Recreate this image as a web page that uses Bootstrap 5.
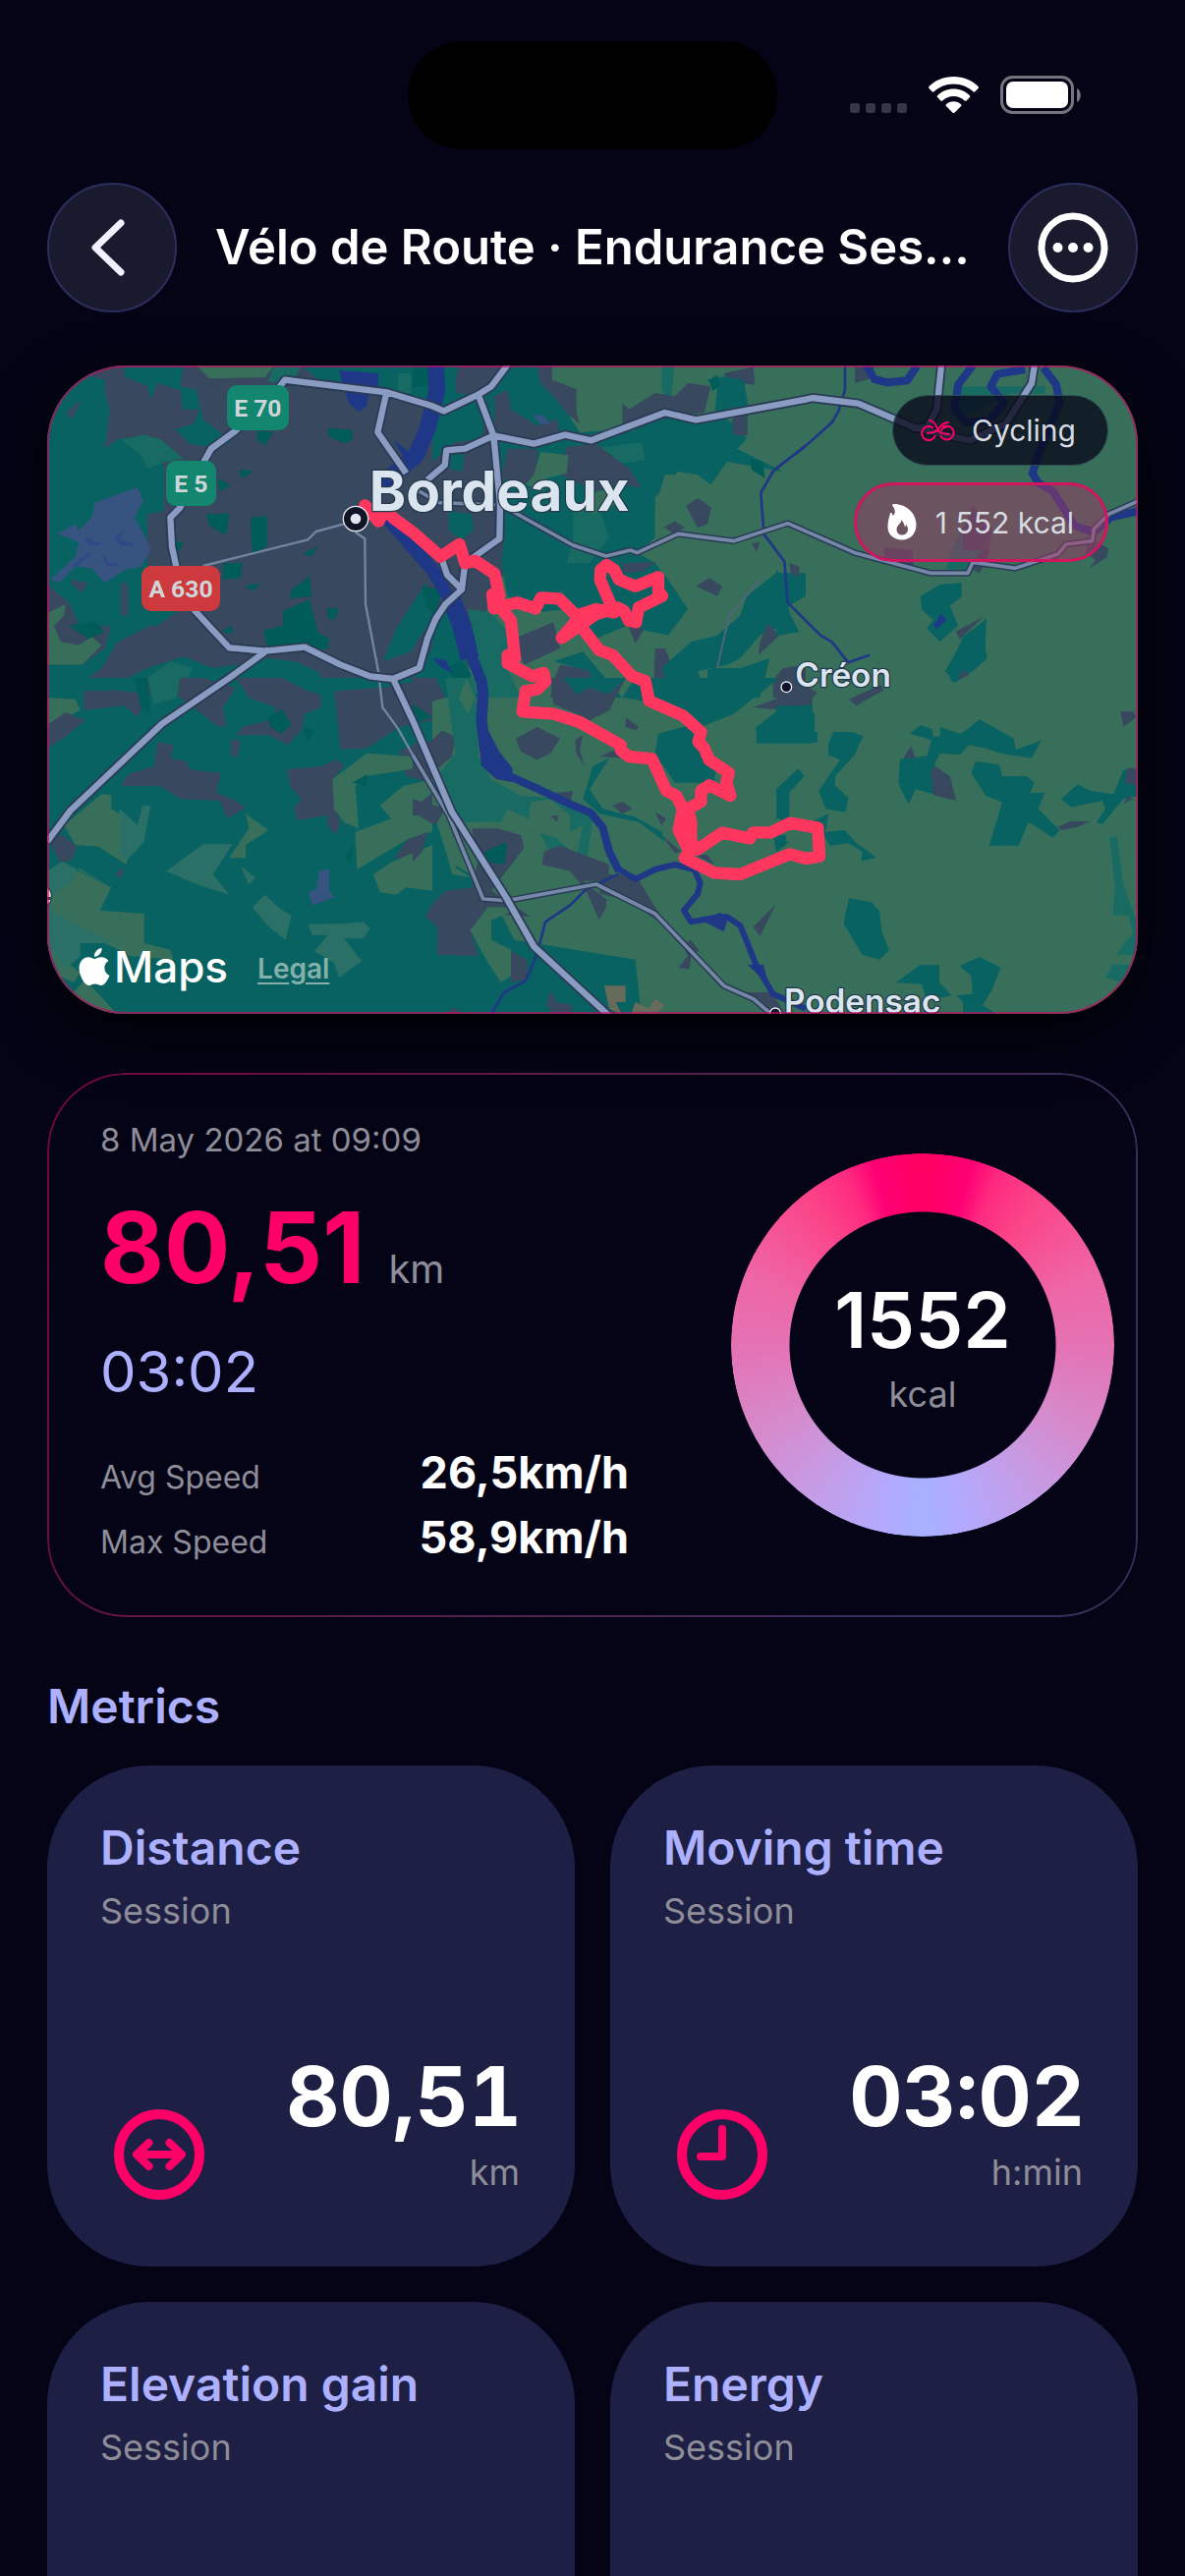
<!DOCTYPE html>
<html lang="en">
<head>
<meta charset="utf-8">
<meta name="viewport" content="width=device-width, initial-scale=1">
<title>Vélo de Route · Endurance Session</title>
<link href="https://cdn.jsdelivr.net/npm/bootstrap@5.3.0/dist/css/bootstrap.min.css" rel="stylesheet">
<style>
  :root { --pink: #ff0068; --lav: #acb0ff; --muted: #8e8d98; --ink: #040416; --tile: #1d1f45; }
  body { background: var(--ink); color: #fff; font-family: Inter, "Noto Sans", sans-serif; line-height: 1.2; overflow-x: hidden; }
  .screen { padding: 0 48px; }
  .status { padding: 42px 58px 34px; }
  .island { width: 376px; height: 110px; border-radius: 55px; background: #000; }
  .signals { gap: 22px; }
  .round-btn { width: 132px; height: 132px; border-radius: 50%; background: #1a1a2e; border: 2px solid #2c2e5e; color: #fff; padding: 0; }
  .round-btn:hover { background: #24243c; color: #fff; }
  .page-title { font-size: 49px; font-weight: 600; line-height: 60px; margin: 0; }
  .map-card { margin-top: 54px; border-radius: 80px; box-shadow: 0 20px 60px rgba(0, 0, 0, .85); }
  .map-card svg.terrain { display: block; width: 100%; border-radius: 80px; }
  .map-edge { inset: 0; border: 2px solid rgba(200, 10, 95, .65); border-radius: 80px; pointer-events: none; }
  .map-pills { top: 30px; right: 30px; gap: 17px; }
  .pill { font-size: 30px; line-height: 36px; border-radius: 40px; color: #d5dbe0; }
  .pill-sport { padding: 17px 32px 17px 28px; background: rgba(8, 8, 26, .78); border: 1px solid #2d4e50; gap: 17px; }
  .pill-energy { padding: 19px 32px 19px 31px; background: rgba(160, 58, 100, .5); border: 3px solid #d3145f; gap: 19px; }
  .attrib { left: 32px; bottom: 20px; gap: 30px; }
  .maps-word { font-size: 44px; line-height: 56px; font-weight: 500; gap: 4px; }
  .legal { font-size: 28px; line-height: 40px; font-weight: 600; color: #86b0ac; text-underline-offset: 4px; padding-top: 4px; }
  .summary { margin-top: 60px; border-radius: 80px; padding: 48px 54px; position: relative; }
  .summary::before { content: ""; position: absolute; inset: 0; border-radius: 80px; padding: 2px; pointer-events: none;
    background: linear-gradient(115deg, #74063f 0, #5c1c48 40%, #33305a 85%);
    -webkit-mask: linear-gradient(#000 0 0) content-box, linear-gradient(#000 0 0); -webkit-mask-composite: xor; mask-composite: exclude; }
  .facts { width: 538px; }
  .label-sm { font-size: 32px; line-height: 40px; color: var(--muted); }
  .stamp { font-size: 33px; line-height: 40px; color: var(--muted); }
  .dist-row { gap: 24px; margin-top: 30px; }
  .dist-num { font-size: 100px; line-height: 120px; font-weight: 700; color: var(--pink); }
  .dist-unit { font-size: 40px; color: var(--muted); }
  .clock-num { font-size: 58px; line-height: 72px; color: var(--lav); margin: 30px 0 34px; }
  .speed { line-height: 66px; }
  .speed strong { font-size: 45px; font-weight: 700; }
  .ring { width: 390px; height: 390px; margin-right: -30px; }
  .ring::before { content: ""; position: absolute; inset: 0; border-radius: 50%;
    background: conic-gradient(#ff0062 0deg, #ff0074 15deg, #ff2a80 24deg, #fb4488 38deg, #ee66a6 68deg, #e472b4 90deg, #d68acb 118deg, #c69be4 142deg, #b2aaff 168deg, #a7b1ff 180deg, #b2aaff 192deg, #c69be4 218deg, #d68acb 242deg, #e472b4 270deg, #ee66a6 292deg, #fb4488 322deg, #ff2a80 336deg, #ff0074 345deg, #ff0062 360deg);
    -webkit-mask: radial-gradient(circle, transparent 135px, #000 136px); mask: radial-gradient(circle, transparent 135px, #000 136px); }
  .ring-num { font-size: 78px; line-height: 90px; font-weight: 600; }
  .ring-unit { font-size: 36px; line-height: 40px; color: var(--muted); margin-top: 10px; }
  .section-title { font-size: 48px; line-height: 60px; font-weight: 600; color: var(--lav); margin: 61px 0 30px; }
  .metric-grid { --bs-gutter-x: 36px; --bs-gutter-y: 36px; }
  .metric { height: 510px; border-radius: 104px; background: var(--tile); padding: 54px; color: #fff; }
  .metric h3 { font-size: 48px; line-height: 60px; font-weight: 600; color: var(--lav); margin: 0; }
  .metric-sub { font-size: 36px; line-height: 44px; color: var(--muted); margin-top: 12px; }
  .metric-icon { width: 92px; height: 92px; margin: 14px; }
  .metric-val { font-size: 84px; line-height: 90px; font-weight: 700; font-variant-numeric: tabular-nums; }
  .metric-unit { font-size: 36px; line-height: 44px; color: var(--muted); margin: 10px 2px 20px 0; }
  .clip-end { height: 100vh; overflow: hidden; }
</style>
</head>
<body>
<div class="clip-end">
<main class="screen">
  <div class="status d-flex justify-content-between align-items-center">
    <div class="flex-fill w-25"></div>
    <div class="island"></div>
    <div class="signals flex-fill w-25 d-flex justify-content-end align-items-center">
      <svg width="58" height="38" viewBox="0 0 58 38" fill="#363646"><rect y="27" width="10" height="10" rx="3"/><rect x="16" y="27" width="10" height="10" rx="3"/><rect x="32" y="27" width="10" height="10" rx="3"/><rect x="48" y="27" width="10" height="10" rx="3"/></svg>
      <svg width="51" height="38" viewBox="0 0 51 38" fill="#fff"><path d="M25.500 0C35.500 0 44.300 3.800 50.500 10c.6.600.6 1.300 0 1.900l-3.200 3.300c-.6.600-1.300.6-1.900 0C40.200 10.400 33.300 7.500 25.500 7.500S10.800 10.400 5.600 15.200c-.6.600-1.300.6-1.900 0L.5 11.900c-.6-.6-.6-1.300 0-1.900C6.700 3.800 15.500 0 25.500 0z"/><path d="M25.500 12.500c6.500 0 12.300 2.500 16.400 6.700.6.600.6 1.300 0 1.900l-3.300 3.300c-.6.600-1.300.6-1.900 0-2.900-2.700-6.800-4.400-11.200-4.400s-8.300 1.700-11.200 4.400c-.6.600-1.300.6-1.900 0l-3.300-3.300c-.6-.6-.6-1.300 0-1.900 4.100-4.200 9.900-6.700 16.400-6.700z"/><path d="M25.500 25.200c3 0 5.700 1.100 7.600 3 .6.600.6 1.200 0 1.800l-6.700 6.700c-.5.500-1.300.5-1.800 0L17.900 30c-.6-.6-.6-1.200 0-1.800 1.900-1.900 4.600-3 7.600-3z"/></svg>
      <svg width="82" height="40" viewBox="0 0 82 40"><rect x="1.500" y="1.500" width="72" height="36" rx="11" fill="none" stroke="#74747f" stroke-width="3"/><rect x="6" y="6" width="63" height="27" rx="7" fill="#fff"/><path d="M78 13v14c5-2 5-12 0-14z" fill="#74747f"/></svg>
    </div>
  </div>

  <header class="d-flex justify-content-between align-items-center">
    <button type="button" class="btn round-btn d-flex align-items-center justify-content-center" aria-label="Back">
      <svg width="60" height="64" viewBox="0 0 60 64" fill="none" stroke="#f0f0ff" stroke-width="7" stroke-linecap="round" stroke-linejoin="round"><path d="M39 7 13 32l26 25"/></svg>
    </button>
    <h1 class="page-title text-nowrap">Vélo de Route · Endurance Ses…</h1>
    <button type="button" class="btn round-btn d-flex align-items-center justify-content-center" aria-label="More">
      <svg width="72" height="72" viewBox="0 0 72 72" fill="#fff"><circle cx="36" cy="36" r="32" fill="none" stroke="#fff" stroke-width="7"/><circle cx="20.500" cy="36" r="5"/><circle cx="36" cy="36" r="5"/><circle cx="51.500" cy="36" r="5"/></svg>
    </button>
  </header>

  <section class="map-card position-relative" aria-label="Route map">
    <svg class="terrain" viewBox="0 0 3330 1980" preserveAspectRatio="xMidYMid slice">
      <defs>
        <style>
          .t{fill:#086262}.s{fill:#37485f}.d{fill:#005c58}.g{fill:#376f5b}.m{fill:#176b63}.v{fill:#2b7066}.b{fill:#1f3787}.k{fill:#375481}
          .w{fill:none;stroke:#1f3787;stroke-linejoin:round}
          .n{fill:none;stroke-linejoin:round}
          .lbl{fill:#dbe5ef;font-family:Inter,"Noto Sans",sans-serif;paint-order:stroke;stroke:#24394a;stroke-width:8px;stroke-linejoin:round}
          .shield{fill:#cfd6da;font-family:Roboto,"Noto Sans",sans-serif;font-weight:700;font-size:74px;text-anchor:middle}
        </style>
      </defs>
      <rect width="3330" height="1980" class="g"/>
      <!-- north-west: city and western woods -->
      <g transform="translate(-24 -36)">
        <path class="s" d="M20 30H1560L1620 110V210L1680 270 1770 340 1820 410 1700 470 1500 560 1400 700 1340 850 1290 1050H20z"/>
        <path class="t" d="M20 30H200L160 70 200 80V120L215 170 200 290 240 260 330 250 400 300 430 320 380 330V480L330 490V640L340 700 430 720 360 760 420 790 360 830 240 835 120 825 90 760 20 700z"/>
        <path class="t" d="M260 40H440L430 100 480 110 500 200 590 270 520 285 460 275 415 230 470 215 490 170 440 170 430 110 360 90 340 140 330 100 260 70z"/>
        <path class="g" d="M480 36H715L690 72 520 76z"/><path class="m" d="M715 36H800L770 95 700 85z"/>
        <path class="m" d="M250 262 320 248 370 262 440 320 390 330 330 350 310 310z"/>
        <path class="t" d="M800 36H1180V160L1060 110 950 100 860 85z"/>
        <path class="d" d="M510 490 580 488 570 555 520 525zM645 500 695 495V590L650 610zM610 355 655 358 620 382zM545 380 585 402 550 420zM560 640 620 638 615 685 560 690zM825 680 832 740 765 748 770 720zM825 750 850 850 885 870 880 902 770 905 695 890 685 845 745 830V785zM880 775 915 780 900 815 880 805zM555 850 590 830V855zM880 228 955 232V265L930 272 885 255zM665 235 715 240 690 280 665 265zM400 560 440 580 415 620zM805 610 850 590 830 620zM630 710 680 700 650 725z"/>
        <path class="k" d="M55 550 110 520 120 540 160 500 170 455 240 430 300 408 318 450 290 500 330 570 340 600 310 650 260 660 200 700 160 655 110 650 60 700 35 690 110 620 120 575z"/>
        <path class="b" opacity=".35" d="M135 566h26v10h24v8h-30zM105 645l20-20 28-18 4 6-26 22-20 18zM228 565l34-32-18 34 44 12v8h-36zM190 615l16 10v14h24l18 8-40 2z"/>
        <path class="s" d="M80 180 130 140 100 200zM100 690 150 700 130 730 95 700zM250 700H270V800H250z"/>
        <path class="g" d="M20 795 80 765 75 800 45 830 65 880 120 890 160 865 190 890 130 950 20 950z"/>
        <path class="t" d="M20 950 130 950 200 900 220 830 340 830 240 880 190 960 60 1050H20z"/>
        <path class="d" d="M90 830 170 815 200 850 150 870z"/>
        <path class="t" d="M180 1050 250 1000 330 960 440 925 530 960 600 950 700 930 780 940 850 970 890 1050z"/>
        <path class="m" d="M330 990 400 940 470 960 420 1050H340z"/>
        <path class="t" d="M1180 700 1200 820 1160 900 1050 940 1090 840zM1090 90l60-40 20 80-60 20z"/>
        <path class="m" d="M1095 60h40v60h-40z"/>
        <path class="b" d="M915 50 1035 60V100L1005 130 1000 160 975 178 945 150 930 110z"/>
        <path class="b" d="M1080 262 1140 310 1120 330z"/>
      </g>
      <!-- north-centre -->
      <g transform="translate(1116 -36)">
        <path class="t" d="M230 110 300 36H380L390 90 430 130 470 180 510 240 640 230 800 190 960 200 1000 230 1020 260 990 290 1130 360 960 330 910 400 870 370H770L740 470V560L690 610 740 640 780 690 840 780 780 860 640 830 540 850 470 780 380 790 290 740 270 640 280 560 240 430 250 300 230 200z"/>
        <path class="g" d="M425 30H780L790 130 700 130 640 150 640 230 510 240 500 110 425 80z"/>
        <path class="t" d="M0 36H140L130 120 230 130 210 260 130 270 60 330 60 180 0 120zM120 300 160 290 150 360 110 350zM110 480 180 490 185 540 150 570 110 540z"/>
        <path class="s" d="M140 36H230L220 110 180 120 130 90zM250 130 290 110 300 170 380 220 440 200 450 240 340 270 250 230zM380 36H425V80L500 108V180L510 215 470 180 430 130 390 90z"/>
        <path class="k" d="M365 185 400 190 420 215 390 215z"/>
        <path class="m" d="M545 290 700 270 710 325 600 340zM490 480 570 470 600 560 540 640 470 640 490 560zM760 36H800L790 130 830 160 800 170 760 110z"/>
        <path class="s" d="M290 290 380 290 380 380 330 400 270 380zM470 285 560 275 660 350 700 410 640 400 560 420 450 370z"/>
        <path class="g" d="M390 300 475 310 470 365 410 380 400 420 345 400 370 370zM530 430l80-20 10 50-70 30zM740 440l70-80 60 10 50 60-30 100-150 30z"/>
        <path class="s" d="M640 150 660 170 740 120 800 130 840 90 910 100 890 180 760 200 640 230zM950 60 1040 40 1045 95 1000 90 960 80zM975 200 1022 180V250L980 250zM835 465 870 440 912 470 900 520 870 532zM765 530 800 512 832 530 800 550zM640 640 745 635 700 665 640 672zM865 710 905 685 945 710 930 740zM660 835 708 838 680 885zM740 900 770 900 800 970 735 1050zM310 870 430 820 450 900 340 950zM430 1000 450 950 545 965 600 1050 420 1050zM1035 580 1060 575 1050 605zM1150 640 1180 650V680L1155 670z"/>
        <path class="t" d="M900 80 950 70 1010 80 1022 140 1020 190 920 200 930 110zM1200 670H1110L1020 740 1000 800 930 860 850 880 760 960 790 1050H900L870 970 960 950 1000 930 1060 860 1130 830 1130 780 1200 740zM900 960H1000L1090 930 1060 1050H900zM600 660 780 700 770 740 830 770 820 810 680 820 560 870 520 840zM430 940 520 910 640 1050H560L540 970z"/>
        <path class="s" d="M1085 825 1120 860 1055 920 1060 880zM1100 1000 1130 960 1200 950V1050H1100z"/>
        <path class="d" d="M1030 320 1070 330 1075 380 1035 355zM905 80 930 65 940 95 915 115zM0 36H70V100H0z"/>
        <path class="m" d="M170 780 240 790 290 850 300 900 270 920 330 1050H200z"/>
        <path class="t" d="M0 800 110 760 150 900 200 1050H0z"/>
        <path class="s" d="M60 900 20 960 0 1000V900l60-90z"/>
        <path class="d" d="M30 710 90 720 70 800 40 770zM100 960 150 940 180 980 150 1010z"/>
        <path class="b" d="M60 930 100 935 120 975 90 960z"/>
      </g>
      <!-- north-east -->
      <g transform="translate(2226 -36)">
        <path class="s" d="M240 40H300L290 75 240 90zM950 560 1015 595 1010 620 955 658 975 630 945 610zM330 590 415 600 420 650 330 632zM570 600 655 600 620 672 590 650zM40 640 70 655V682L50 675z"/>
        <path class="m" d="M540 100H820V122H720L700 130 560 200zM520 660 530 610 600 470 640 540 630 600 585 660z"/>
        <path class="s" opacity=".8" d="M600 462 660 530 650 600H570V540z"/>
        <path class="t" d="M0 660 25 680 40 790 70 850 0 862zM440 740 500 705 566 700V742L530 770 555 830 500 880 460 840 480 812 444 782zM642 810 638 900 645 930 600 970 545 1005 515 970 550 910 570 865z"/>
        <path class="s" d="M548 848 632 804 560 872zM550 1000 570 965 590 980z"/>
        <path class="b" d="M480 830 503 795 520 812 490 840z"/>
        <path class="s" d="M0 980 30 970 60 1050H0z"/>
        <g class="w" stroke-width="24"><path d="M275 36 300 78 340 88 400 82 430 36M600 36 555 95 545 170 580 210 650 205 695 150 655 100 675 62 760 48M815 42 855 95 865 150 800 310 782 365 800 395 845 420 880 475 910 525 970 545 1020 500 1110 480"/></g>
      </g>
      <!-- south-west -->
      <g transform="translate(-24 954)">
        <path class="t" d="M0 0H1200V400L1250 560 1350 620 1400 700 1450 800 1820 860 1840 1050H0z"/>
        <path class="g" d="M20 60 110 65 125 98 40 140 20 150z"/>
        <path class="s" d="M136 40 240 38 300 45 330 0H470L500 0 600 30 560 90 570 150 540 145 470 90 400 40 330 50 300 120 260 85 136 98zM30 140 80 105 140 130 80 180 24 215zM600 0H740L820 40 860 50V90L810 110 800 160 760 205 700 175H600L620 150 720 125 720 90 640 60zM585 190 615 190 605 240 585 240zM900 40 1050 30 1200 0V130L1100 150 1000 215 920 218zM360 195 410 205 400 245 450 255 460 280 555 290 540 350 590 370 630 395 575 430 550 375 430 370 370 330 250 330 270 295 350 270zM755 280 860 270 910 248 930 270 895 310 905 400 920 440 905 480 880 450 880 420 790 435 775 400 800 370 765 330zM30 500 70 478 115 515 100 555 65 565zM230 600 260 578 250 612zM1100 220 1200 190V320L1120 300zM1130 385 1200 355V420H1130zM1125 490 1185 465 1165 540 1130 560 1085 550z"/>
        <path class="g" d="M75 450 190 355 220 358V400L300 450 265 570 180 515 110 510zM120 590 220 640 185 710 320 720V810L400 830 410 860 280 850 120 770 30 730V640zM24 810 60 850 125 900 105 930 60 910zM105 960 140 920 240 1030H160zM630 415 700 465 630 510V550H580L640 460zM895 310 1000 230 1140 240 1190 270 1000 300 965 330 975 460 930 440 900 400zM1040 390 1110 330 1200 310V350L1140 400V420H1200V470L1130 490 970 585 965 470 1075 430zM1020 600 1080 560 1200 510V650L1120 640 1090 662 1040 655z"/>
        <path class="v" d="M24 590 70 560 220 640 120 580 100 620 24 680zM24 700 120 760 230 810H125V850L80 890 24 810zM245 400 300 450 315 390H340L320 500 265 560 245 540zM388 590 500 508H590L530 600 580 662 480 630zM615 575 660 610 640 632zM650 700 690 662 735 705 770 725 752 800 700 760zM822 752 930 750 990 745 1010 765 990 795 930 795 985 865 915 915 900 870 840 835 880 785H832z"/>
        <path class="m" d="M330 0H430L420 60 350 80z"/>
        <path class="d" d="M290 0H330L340 110 310 90zM700 120 740 95 770 140 740 170 705 150zM800 150 840 160 820 195zM955 320 1000 295V330zM930 545 960 510 950 570z"/>
        <path class="k" d="M855 588 885 586V650L900 670 835 695 822 655 845 645z"/>
        <path class="s" d="M1180 720 1220 690V750z"/>
      </g>
      <!-- south-centre -->
      <g transform="translate(1116 954)">
        <path class="s" d="M0 0H70L100 60 30 80 0 90zM50 200 90 160 130 180 120 240 60 290 0 280V200zM0 370 100 400 70 450 0 410zM0 490 45 470 30 530 0 560zM60 690 100 650 180 640 200 560 180 460 260 460 330 480 340 520 240 650 360 730 230 720 180 780 200 850 75 845V760L40 730z"/>
        <path class="m" d="M100 0H190L200 240 240 310 330 360 470 370 550 430 530 560 410 520 370 430 350 430 290 400 270 440 130 440 60 320 130 230z"/>
        <path class="d" d="M0 80 60 120 0 140zM220 530 290 500 280 570 220 560z"/>
        <path class="g" d="M140 60 165 0 190 60 170 110zM230 90 330 100 510 130 640 200 640 330 540 350 420 340 310 280 250 200zM95 500 180 455 130 580 180 610 120 600zM360 380 420 370 480 420 480 470 520 450 500 545 440 490 350 460zM175 770 230 700 290 700 350 670V620L380 600 420 660 470 660 500 720 430 745 380 740 360 690 240 740 240 800 300 830 300 910 270 930 230 870z"/>
        <path class="s" d="M315 185 380 150 450 185 420 230 380 250 330 225zM495 190 520 175 510 220 525 270 500 230zM440 350 490 345 480 380 430 370zM400 530 450 512 600 570 590 700 570 740 530 650 480 590 395 570zM740 410 775 430 760 450zM610 390 640 378 670 400 640 415zM300 835 350 860V920L300 930zM420 420 445 420 440 440zM690 650H740L730 700 700 680zM820 800 850 790 885 825 850 850 845 890 810 885 840 850zM760 720 800 700 810 740zM1040 760 1110 690 1060 790zM950 910 1030 920 1090 950 1140 1030H1090L1040 980 960 950zM760 480 820 530 800 535zM410 1000 420 955 440 990 490 1000 480 1030H430zM90 1030 130 1005 150 1030zM420 0 650 0 600 100 540 130 500 110 430 80zM570 240 620 220 650 245zM650 120 690 150 680 160 650 150zM780 200 810 200 790 240 830 265 770 270z"/>
        <path class="t" d="M460 0H650L600 50 540 30 500 50zM680 0H1120L980 110 880 150 760 80 640 60zM750 170 860 140 930 260 920 320H800L740 230zM1050 200 1048 150 1150 75H1220V200zM550 270 600 245 540 340 580 400 680 425 760 470 770 500 690 440 570 415 520 370zM1105 350 1180 280 1195 300 1150 350V450L1125 470V360z"/>
        <path class="g" d="M650 100 720 90 800 120 740 180 670 130zM520 620H850L1050 800 1100 960H970L850 800 760 850 800 930 780 960 720 940 740 880 660 820 620 700zM970 1030 980 970 1090 1010 1100 1030z"/>
        <path d="M585 940H650V990H620L640 1030 600 1010zM665 1030 680 990 720 1010 740 980 770 1000 740 1030z" fill="#666b5c"/>
        <path class="s" d="M580 600h100l60 100 40 60-50-30-60-50-100-20zM1040 90 1120 60 1220 40V80L1140 100z"/>
        <path class="t" d="M1100 480h40v30l-30 20z"/>
        <path class="s" d="M860 540 900 540 920 570z"/>
      </g>
      <!-- south-east -->
      <g transform="translate(2226 954)">
        <path class="s" d="M0 0H50L125 45 90 85H0zM222 65 320 20 328 38 270 70 245 85zM1050 102H1090L1098 120 1060 150zM860 455 900 437 958 438 920 455 870 465z"/>
        <path class="t" d="M0 85H100L117 110V165H126V197H0zM175 165H232L266 178 250 210 240 235 180 300 180 330 220 365 212 410 150 400 130 345 160 300 195 250 158 235 160 200zM0 340 65 278 85 300 38 350V430H0zM408 170 440 145 475 155 480 180 500 178V150L560 170 580 160 620 127 680 160 725 185 732 220 810 190 780 245 690 232 640 215 590 205 560 235 500 230 485 260 480 355 425 340 405 385 390 360 373 320 378 248 460 238 475 190zM595 290 610 255 680 265 690 300H765L788 320 775 352 820 350 800 400 865 465 845 488 770 440 740 512H650L690 380 640 360zM870 370 920 325 960 345 1030 355 1060 280H1103V360L1060 370 995 448 978 440 1005 400 995 375 900 395zM115 435 160 415 150 470 210 465 240 500 305 548 260 560 262 530 220 505 165 512zM222 672 290 685 315 710 322 775 345 832 315 860 262 845 230 790 205 750zM365 930 440 877H498V930L535 970 460 985 445 935zM560 880 620 852 685 885 660 950 630 1000 680 1030H570V990L550 970 600 965 595 910zM528 0H555L540 15z"/>
        <path class="s" d="M388 245 412 208 425 245zM472 280 490 272 530 300 550 375 480 358zM1065 320 1070 275 1095 275 1103 330zM1060 385 1075 358 1090 370z"/>
        <path class="m" d="M1018 485H1040L1062 640 1100 740V845H1040L1070 800 1090 780 1075 725H1028L1035 640zM1003 915 1030 875H1103L1080 935z"/>
        <path class="t" d="M0 490 38 500 0 530z"/>
      </g>
      <!-- water courses -->
      <g class="w">
        <path stroke-width="50" d="M1186 0 1191 74 1161 194 1126 274 1056 334 1030 380"/>
        <path stroke-width="40" d="M1036 464 1176 624 1236 724"/>
        <path stroke-width="58" d="M1232 710 1266 794 1290 894"/>
        <path stroke-width="34" d="M1286 864 1326 964 1331 1004 1326 1084 1338 1180"/>
        <path class="b" d="M1314 1100 1344 1110 1380 1180 1420 1230 1420 1272 1370 1262 1326 1222z"/>
        <path stroke-width="24" d="M1340 1204 1416 1256 1496 1292 1596 1339 1660 1366 1696 1410 1716 1484 1746 1544"/>
        <path stroke-width="18" d="M1740 1534 1796 1569 1856 1539 1916 1524 1976 1540 1994 1580 1986 1614 1944 1664 1966 1699 2040 1686 2076 1684 2116 1710 2146 1784 2166 1834 2216 1919 2316 1964"/>
        <path class="b" d="M2010 1700 2050 1672 2080 1680 2066 1728zM2140 1830 2186 1830 2200 1880 2180 1870z"/>
        <path stroke-width="8" d="M2316 244 2216 324 2179 389 2188 514 2251 599 2261 724 2361 824 2396 844 2446 907 2511 884M2226 314 2306 254 2396 174 2416 140 2436 74V0M1746 1552 1646 1599 1596 1649 1521 1699 1500 1780 1481 1834 1461 1879 1396 1914 1356 1980"/>
      </g>
      <!-- roads: casing first, then fill -->
      <g class="n">
        <path stroke="#4f6679" stroke-width="6" d="M2178 650 2081 770 2046 924"/>
        <path stroke="#7485a2" stroke-width="7" d="M906 484 821 507 796 532 476 612M941 509 970 529 972 729 1011 934 1024 1044 1071 1109 1116 1189"/>
        <path stroke="#2b3b55" stroke-width="20" d="M1136 384 1196 419 1386 426 1606 549 1706 582 1781 564 1801 572 1926 514 2096 536 2261 482 2466 572 2696 634H2811L2826 601 2956 619 3086 576 3111 546 3191 536 3196 499 3241 454 3331 414M1116 1189 1226 1374 1331 1629 1406 1634 1676 1584 1856 1674 2066 1894 2156 1934 2216 1985"/>
        <path stroke="#7688a8" stroke-width="11" d="M1136 384 1196 419 1386 426 1606 549 1706 582 1781 564 1801 572 1926 514 2096 536 2261 482 2466 572 2696 634H2811L2826 601 2956 619 3086 576 3111 546 3191 536 3196 499 3241 454 3331 414M1116 1189 1226 1374 1331 1629 1406 1634 1676 1584 1856 1674 2066 1894 2156 1934 2216 1985"/>
        <path stroke="#2b3b55" stroke-width="30" d="M1420-30 1401 4 1356 64 1316 89 1211 139 1176 124 1036 82 726 44 690 90 576 199 501 254 481 289 406 434 376 464 381 554 394 614 451 749 556 862 666 872 786 860 896 914 986 949 1056 957 1136 924 1161 834 1186 774 1216 729 1266 684 1221 639 1206 594M1266 684 1276 604 1311 579 1381 529 1383 424 1363 214 1316 89M1036 82 1009 204 1096 329M1363 214 1486 239 1581 212 1661 229 1886 144 1981 166 2316 104 2336 99 2476 116 2646 189 2816 229 2926 179 3006 54 3016-10M2731-10 2716 134 2686 189 2640 192M1363 214 1276 254 1219 259 1214 304 1161 349M676 867 556 954 351 1094 71 1359 0 1454M1056 957 1116 1084 1236 1364 1401 1624 1486 1774 1720 1990"/>
        <path stroke="#8a9cc2" stroke-width="19" d="M1420-30 1401 4 1356 64 1316 89 1211 139 1176 124 1036 82 726 44 690 90 576 199 501 254 481 289 406 434 376 464 381 554 394 614 451 749 556 862 666 872 786 860 896 914 986 949 1056 957 1136 924 1161 834 1186 774 1216 729 1266 684 1221 639 1206 594M1266 684 1276 604 1311 579 1381 529 1383 424 1363 214 1316 89M1036 82 1009 204 1096 329M1363 214 1486 239 1581 212 1661 229 1886 144 1981 166 2316 104 2336 99 2476 116 2646 189 2816 229 2926 179 3006 54 3016-10M2731-10 2716 134 2686 189 2640 192M1363 214 1276 254 1219 259 1214 304 1161 349M676 867 556 954 351 1094 71 1359 0 1454M1056 957 1116 1084 1236 1364 1401 1624 1486 1774 1720 1990"/>
      </g>
      <!-- ride -->
      <path class="n" stroke="#ff375f" stroke-width="37" stroke-linecap="round" d="M970 427 1012 476 1030 440 1060 468 1116 509 1201 584 1259 546 1276 604 1306 596 1366 636 1381 704 1359 699 1364 742 1436 724 1491 742 1508 709 1563 712 1616 764 1676 744 1731 754 1688 654 1690 624 1708 609 1731 624 1746 654 1796 674 1866 646V689L1878 704 1806 739 1798 784 1776 779 1761 749 1741 739 1676 759 1571 832 1616 779 1686 869 1726 884 1786 949 1826 964 1838 1024 1941 1069 1996 1119 1988 1149 2006 1169 2021 1204 2081 1244 2074 1274 2086 1314 2021 1282 1996 1299V1332L1956 1354 1966 1394V1454L1984 1479 2061 1427 2146 1444 2156 1426H2211L2268 1397 2353 1412 2358 1499 2318 1506 2268 1492 2116 1554 2036 1549 1946 1504 1961 1484 1928 1419 1941 1354 1921 1314 1891 1299 1846 1201 1776 1194 1751 1174V1159L1626 1089 1546 1064 1451 1057 1461 994 1496 989 1521 965 1516 939 1481 949 1406 909V884L1428 894 1416 779 1386 742"/>
      <path d="M1952 1360 1980 1380V1460L1950 1480 1930 1420z" fill="#ff375f"/>
      <!-- places -->
      <circle cx="942" cy="468" r="38" fill="#101426" stroke="#e6ecf4" stroke-width="4"/><circle cx="942" cy="468" r="16" fill="#e0e8f0"/>
      <circle cx="2257" cy="982" r="16" fill="#101426" stroke="#e6ecf4" stroke-width="4"/>
      <circle cx="2223" cy="1978" r="16" fill="#101426" stroke="#e6ecf4" stroke-width="4"/>
      <text class="lbl" x="983" y="444" font-size="170" font-weight="700">Bordeaux</text>
      <text class="lbl" x="2284" y="982" font-size="100" font-weight="600">Créon</text>
      <text class="lbl" x="2250" y="1976" font-size="100" font-weight="600">Podensac</text>
      <text class="lbl" x="-44" y="1648" font-size="100" font-weight="600">e</text>
      <rect x="549" y="60" width="189" height="138" rx="30" fill="#12866f"/><text class="shield" x="643" y="156">E 70</text>
      <rect x="363" y="291" width="153" height="138" rx="30" fill="#12866f"/><text class="shield" x="439" y="387">E 5</text>
      <rect x="288" y="612" width="240" height="138" rx="30" fill="#cd393c"/><text class="shield" x="408" y="708">A 630</text>
    </svg>
    <div class="map-edge position-absolute"></div>
    <div class="map-pills position-absolute d-flex flex-column align-items-end">
      <div class="pill pill-sport d-flex align-items-center">
        <svg width="35" height="24" viewBox="0 0 35 24" fill="none" stroke="#ff0068" stroke-width="2" stroke-linecap="round"><path d="M12 9.200A7 7 0 1 0 14.500 18M20.500 18a7 7 0 1 0 2-9.200"/><path d="M7 15l6-1 4-2 4 3 8 1M9 2c4 0 7 5 9 11M18 11c3-5 6-7 10-7M21 12c2-3 4-4 8-4"/></svg>
        <span>Cycling</span>
      </div>
      <div class="pill pill-energy d-flex align-items-center">
        <svg width="30" height="37" viewBox="0 0 30 37" fill="#fff" fill-rule="evenodd"><path d="M5 1.500C5 .5 6 0 7 0c12 0 22.500 9 22.500 21C29.500 30 23.500 36.500 15 36.500S.5 31 .5 23.500c0-5 1-9 2.500-14 .3-1 1.300-1 1.800 0l1 2.500C8 10.500 9 6 5 1.500zM14 16c1.500 3-4.500 5-4.500 10 0 3.500 2.500 5.500 5.500 5.500s6-2 6-6c0-2-1-3-2-4.500l-1 3c-.5-3-1.500-6-4-8z"/></svg>
        <span>1 552 kcal</span>
      </div>
    </div>
    <div class="attrib position-absolute d-flex align-items-center">
      <span class="maps-word d-flex align-items-center">
        <svg width="32" height="38" viewBox="2 0 20 24" fill="#fff"><path d="M12.152 6.896c-.948 0-2.415-1.078-3.960-1.040-2.040.027-3.910 1.183-4.961 3.014-2.117 3.675-.546 9.103 1.519 12.090 1.013 1.454 2.208 3.090 3.792 3.039 1.520-.065 2.090-.987 3.935-.987 1.831 0 2.350.987 3.960.948 1.637-.026 2.676-1.480 3.676-2.948 1.156-1.688 1.636-3.325 1.662-3.415-.039-.013-3.182-1.221-3.220-4.857-.026-3.040 2.480-4.494 2.597-4.559-1.429-2.090-3.623-2.324-4.390-2.376-2-.156-3.675 1.090-4.610 1.090zM15.530 3.830c.843-1.012 1.400-2.427 1.245-3.830-1.207.052-2.662.805-3.532 1.818-.780.896-1.454 2.338-1.273 3.714 1.338.104 2.715-.688 3.559-1.701"/></svg>
        Maps
      </span>
      <a href="#legal" class="legal">Legal</a>
    </div>
  </section>

  <section class="summary d-flex justify-content-between align-items-center">
    <div class="facts">
      <div class="stamp">8 May 2026 at 09:09</div>
      <div class="dist-row d-flex align-items-baseline"><span class="dist-num">80,51</span><span class="dist-unit">km</span></div>
      <div class="clock-num">03:02</div>
      <div class="speed d-flex justify-content-between align-items-baseline"><span class="label-sm">Avg Speed</span><strong>26,5km/h</strong></div>
      <div class="speed d-flex justify-content-between align-items-baseline"><span class="label-sm">Max Speed</span><strong>58,9km/h</strong></div>
    </div>
    <div class="ring position-relative d-flex flex-column align-items-center justify-content-center">
      <div class="ring-num">1552</div>
      <div class="ring-unit">kcal</div>
    </div>
  </section>

  <h2 class="section-title">Metrics</h2>
  <div class="row metric-grid">
    <div class="col-6"><article class="metric d-flex flex-column justify-content-between">
      <div><h3>Distance</h3><div class="metric-sub">Session</div></div>
      <div class="d-flex justify-content-between align-items-end">
        <svg class="metric-icon" viewBox="0 0 92 92" fill="none" stroke="#ff0068" stroke-linecap="round" stroke-linejoin="round"><circle cx="46" cy="46" r="41" stroke-width="10"/><path stroke-width="8" d="M24 46h44M35.500 34 23 46l12.500 12M56.500 34 69 46 56.500 58"/></svg>
        <div class="text-end"><div class="metric-val">80,51</div><div class="metric-unit">km</div></div>
      </div>
    </article></div>
    <div class="col-6"><article class="metric d-flex flex-column justify-content-between">
      <div><h3>Moving time</h3><div class="metric-sub">Session</div></div>
      <div class="d-flex justify-content-between align-items-end">
        <svg class="metric-icon" viewBox="0 0 92 92" fill="none" stroke="#ff0068" stroke-linecap="round" stroke-linejoin="round"><circle cx="46" cy="46" r="41" stroke-width="10"/><path stroke-width="8" d="M46 20v28H24"/></svg>
        <div class="text-end"><div class="metric-val">03:02</div><div class="metric-unit">h:min</div></div>
      </div>
    </article></div>
    <div class="col-6"><article class="metric"><h3>Elevation gain</h3><div class="metric-sub">Session</div></article></div>
    <div class="col-6"><article class="metric"><h3>Energy</h3><div class="metric-sub">Session</div></article></div>
  </div>
</main>
</div>
<script src="https://cdn.jsdelivr.net/npm/bootstrap@5.3.0/dist/js/bootstrap.bundle.min.js"></script>
</body>
</html>
